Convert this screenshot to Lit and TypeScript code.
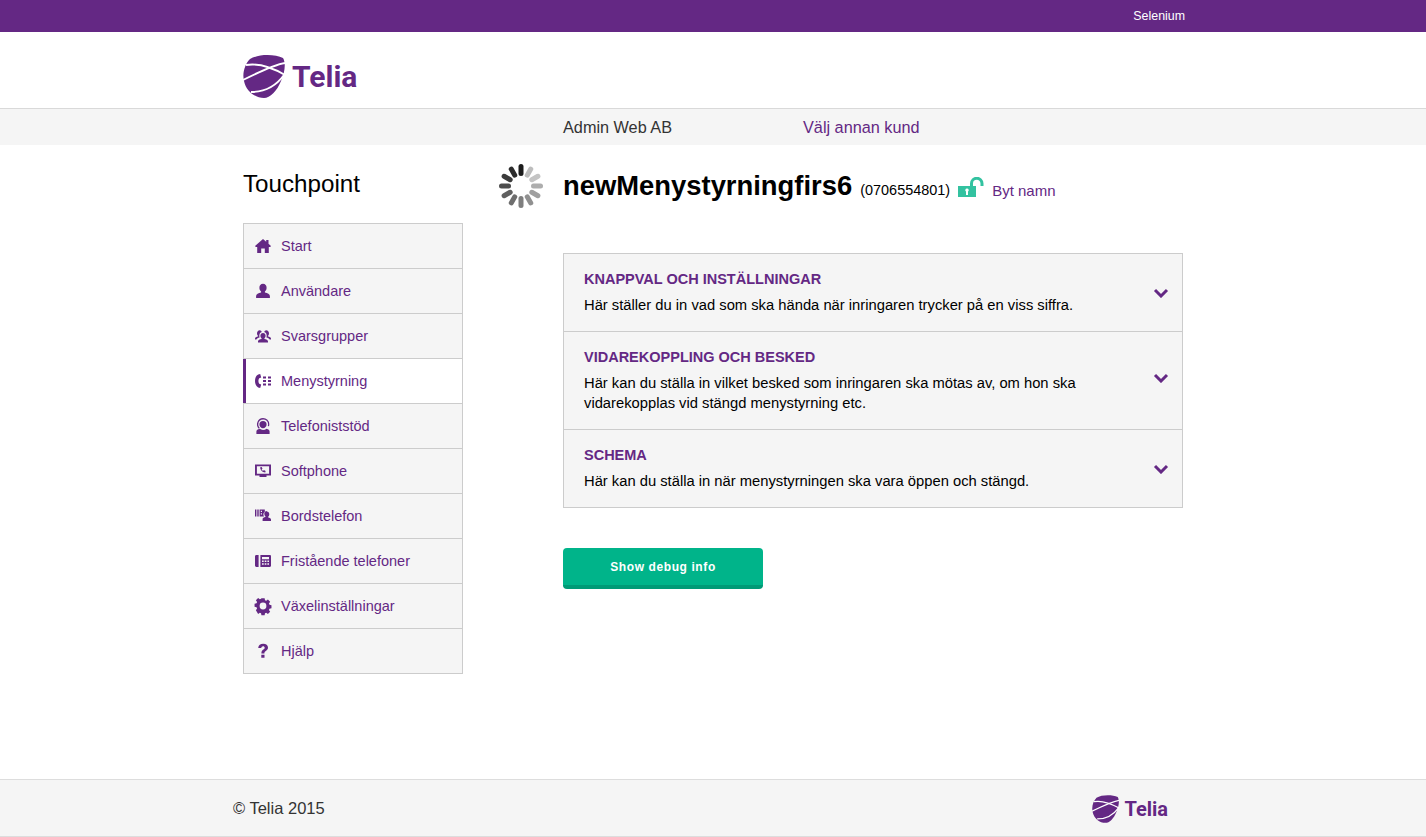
import { LitElement, html, css, svg } from "lit";
import { customElement } from "lit/decorators.js";

const logo = (w: number, h: number) => html`<svg class="globe" width=${w} height=${h} viewBox="0 0 42 43">
  <path fill="#642884" d="M7 4C15-1 32-1 40 3C43 8 42 17 38 26C34 36 27 43 21 43C12 43 3 36 1 26C-1 18 2 9 7 4Z"/>
  <g fill="none" stroke="#fff" stroke-width="1.900">
    <path d="M3 10C15 8 30 13 42 20"/>
    <path d="M42 8C30 10 14 18 0 25"/>
    <path d="M8 37C21 37 33 31 41 20"/>
  </g>
</svg>`;

const icons: Record<string, unknown> = {
  home: svg`<path d="M8 1l3.200 2.800V2h2.300v3.800L16 8l-.8 1H13.800v6H9.800v-4.500H6.200V15h-4V9H.8L0 8z"/>`,
  user: svg`<path d="M8 .8c2.300 0 3.600 1.700 3.600 3.900 0 1.600-.7 3-1.700 3.800v1.100c2.600.6 5 1.600 5 3.500v1.900H1.100v-1.900c0-1.900 2.400-2.900 5-3.500V8.500C5.100 7.700 4.400 6.300 4.400 4.700 4.400 2.500 5.700.8 8 .8z"/>`,
  group: svg`<path d="M8 5c1.600 0 2.600 1.200 2.600 2.800 0 1.100-.5 2-1.200 2.600v.7c1.800.4 3.600 1.100 3.600 2.400v.9H3v-.9c0-1.300 1.800-2 3.600-2.400v-.7c-.7-.6-1.200-1.500-1.200-2.600C5.400 6.200 6.400 5 8 5zM4.700 2.200c1.100 0 1.900.8 2.100 1.900C5.100 4.500 4.300 6.100 4.300 7.800c0 .6.100 1.100.3 1.600-1.500.4-2.800 1.100-3.300 2.100H0v-1c0-1.100 1.400-1.700 2.900-2v-.8C2.300 7.200 2 6.400 2 5.500 2 3.600 3.100 2.200 4.700 2.200zM11.300 2.200c1.600 0 2.700 1.400 2.700 3.300 0 .9-.3 1.700-.9 2.200v.8c1.500.3 2.900.9 2.900 2v1h-1.300c-.5-1-1.800-1.700-3.300-2.100.2-.5.300-1 .3-1.600 0-1.700-.8-3.300-2.500-3.700.2-1.100 1-1.900 2.100-1.900z"/>`,
  menu: svg`<path d="M5.200 1 3.200 1.600C1 2.800 0 5.200 0 8s1 5.200 3.200 6.400l2 .6 1-3.400-2-.9C3.700 10 3.400 9.100 3.400 8s.3-2 .8-2.700l2-.9z"/><path d="M8 3.500h3v1.900H8zM13 3.500h3v1.900h-3zM8 7.050h3v1.900H8zM13 7.050h3v1.900h-3zM8 10.600h3v1.900H8zM13 10.600h3v1.900h-3z"/>`,
  support: svg`<path d="M8 0a6.300 6.300 0 0 1 6.300 6.300c0 .7-.1 1.400-.3 2l-1.200-.4c.2-.5.300-1 .3-1.600a4.900 4.900 0 0 0-9.800 0c0 1.400.5 2.600 1.400 3.500l-.9.900A6.300 6.300 0 0 1 8 0zM8 2.900a3.600 3.600 0 0 1 3.600 3.600c0 2-1.600 3.700-3.600 3.700S4.400 8.500 4.400 6.500A3.600 3.600 0 0 1 8 2.900zM4.700 10.800c.9.700 2.100 1.100 3.300 1.100 1.400 0 2.600-.4 3.500-1.200 1.900.5 3.100 1.400 3.100 2.700V16H1.400v-2.600c0-1.200 1.300-2.100 3.300-2.600z"/>`,
  softphone: svg`<path fill-rule="evenodd" d="M0 1.500h16v11h-4.500V14h-7v-1.500H0zM1.900 3.200v7.600h12.200V3.200z"/><path d="M5.200 4.300l1.500-.3.800 1.800-.9.700c.3.600.8 1.100 1.500 1.500l.7-.9 1.800.8-.3 1.500c-2.600.2-5.300-2.500-5.100-5.100z"/>`,
  desk: svg`<path d="M0 1.500h1.400v7H0zM2.300 1.500h1.400v7H2.300zM4.600 1.500h5.200v2.200c-.9.600-1.400 1.700-1.400 2.800 0 .8.200 1.500.6 2H4.600zM5.800 2.700V4H7V2.700zM5.800 5.200v1.300H7V5.200zM11.800 3.500c1.500 0 2.500 1.200 2.500 2.800 0 1.100-.4 1.900-1.100 2.400v.8c1.500.3 2.800.9 2.800 2v1.500H7.600V11c0-1.100 1.300-1.700 2.800-2v-.8c-.7-.5-1.100-1.300-1.100-2.400 0-1.600 1-2.800 2.500-2.800z"/>`,
  phones: svg`<path fill-rule="evenodd" d="M0 3.400C0 2.600.6 2 1.400 2h2.200v12H1.400C.6 14 0 13.400 0 12.600zM5.400 2h9.400c.7 0 1.200.5 1.200 1.200v9.600c0 .7-.5 1.200-1.200 1.200H5.400zM7 4v2.300h7V4zM7 7.500v1.500h1.700V7.500zM9.700 7.500v1.500h1.700V7.500zM12.400 7.500v1.500H14V7.500zM7 10.200v1.500h1.700v-1.500zM9.700 10.200v1.500h1.700v-1.500zM12.400 10.200v1.500H14v-1.500z"/>`,
  gear: svg`<path fill-rule="evenodd" d="M6.300 0h3.400l.4 2.100 1.300.6L13.200 1.400l2.400 2.400-1.300 1.800.6 1.300 2.100.4v3.400l-2.100.4-.6 1.300 1.300 1.800-2.400 2.400-1.800-1.300-1.300.6-.4 2.100H6.300l-.4-2.100-1.300-.6-1.800 1.300L.4 12.600l1.300-1.800-.6-1.300L-1 9.100V5.700l2.100-.4.6-1.300L.4 2.200 2.800-.2 4.600 1.100l1.300-.6z" transform="translate(0.500 0.300) scale(.94)"/><circle cx="8" cy="8" r="3.400" fill="#f5f5f5"/>`,
  help: svg`<path d="M3.200 4.900C3.500 2.100 5.500.7 8.200.7c2.900 0 4.800 1.500 4.800 3.900 0 1.700-.9 2.600-2.200 3.500-1 .7-1.400 1.200-1.400 2.300H6.400c0-2 .6-2.900 1.900-3.800.9-.6 1.400-1 1.400-1.800 0-.9-.7-1.500-1.600-1.500-1 0-1.700.7-1.800 1.800zM6.300 11.700h3.200v3.100H6.300z"/>`,
};

const nav = [
  ["Start", "home"],
  ["Användare", "user"],
  ["Svarsgrupper", "group"],
  ["Menystyrning", "menu"],
  ["Telefoniststöd", "support"],
  ["Softphone", "softphone"],
  ["Bordstelefon", "desk"],
  ["Fristående telefoner", "phones"],
  ["Växelinställningar", "gear"],
  ["Hjälp", "help"],
];

const spinnerColors = ["#1c1c1c", "#bdbdbd", "#c4c4c4", "#adadad", "#a0a0a0", "#909090", "#7e7e7e", "#6e6e6e", "#606060", "#4c4c4c", "#3c3c3c", "#2c2c2c"];

const panels = [
  ["Knappval och inställningar", "Här ställer du in vad som ska hända när inringaren trycker på en viss siffra."],
  ["Vidarekoppling och besked", "Här kan du ställa in vilket besked som inringaren ska mötas av, om hon ska vidarekopplas vid stängd menystyrning etc."],
  ["Schema", "Här kan du ställa in när menystyrningen ska vara öppen och stängd."],
];

@customElement("app-root")
export class AppRoot extends LitElement {
  static styles = css`
    :host { display: block; font-family: "Liberation Sans", Arial, sans-serif; color: #000; background: #fff; }
    a { color: #642884; text-decoration: none; }
    .top { height: 32px; background: #642884; display: flex; justify-content: flex-end; align-items: center; padding-right: 241px; }
    .top span { color: #fff; font-size: 12.4px; }
    .head { height: 64px; padding: 12px 0 0 243px; display: flex; align-items: center; border-bottom: 1px solid #d9d9d9; }
    .brand { display: flex; align-items: center; color: #642884; font-family: Roboto, "Liberation Sans", sans-serif; font-weight: 700; }
    .brand.big { gap: 7px; font-size: 30px; }
    .brand.small { gap: 5px; font-size: 20px; }
    .sub { height: 35px; background: #f5f5f5; padding: 1px 0 0 563px; display: flex; align-items: center; font-size: 16.25px; color: #333; }
    .sub .customer { width: 240px; }
    main { height: 634px; width: 940px; margin-left: 243px; display: flex; }
    aside { width: 220px; margin-right: 36px; }
    aside h2 { margin: 24px 0 24px; font-weight: 400; font-size: 24.2px; line-height: 30px; color: #000; }
    nav { border: 1px solid #ccc; border-bottom: 0; }
    .item { display: flex; align-items: center; height: 44px; border-bottom: 1px solid #ccc; background: #f5f5f5; padding-left: 11px; gap: 10px; font-size: 14.5px; color: #642884; }
    .item svg { width: 16px; height: 16px; fill: #642884; flex: none; overflow: visible; }
    .item.on { background: #fff; box-shadow: inset 3px 0 0 #642884; margin-left: -1px; padding-left: 12px; }
    .right { width: 684px; }
    .title { display: flex; align-items: center; height: 44px; margin-top: 19px; }
    .title .spin { margin-right: 20px; flex: none; }
    .title h1 { margin: 0 8px 0 0; font-size: 27.4px; font-weight: 700; }
    .title .num { font-size: 14.45px; margin-top: 8px; margin-right: 8px; }
    .title .lock { margin-top: 2px; margin-right: 7px; }
    .title a { font-size: 15px; margin-top: 9px; }
    .content { padding-left: 64px; }
    .panels { margin-top: 45px; border: 1px solid #ccc; border-bottom: 0; }
    .panel { position: relative; background: #f5f5f5; border-bottom: 1px solid #ccc; padding: 16px 60px 16px 20px; }
    .panel h3 { margin: 0 0 7px; font-size: 14.5px; line-height: 18px; text-transform: uppercase; color: #642884; }
    .panel p { margin: 0; font-size: 14.76px; line-height: 20px; }
    .panel svg { position: absolute; right: 13px; top: 34px; }
    .panel:nth-child(2) svg { top: 41px; }
    .btn { margin-top: 40px; width: 200px; height: 37px; background: #00b48a; border: 0; border-bottom: 4px solid #009a76; box-sizing: content-box; border-radius: 4px; color: #fff; font: 700 12px "Liberation Sans", Arial, sans-serif; letter-spacing: 0.6px; padding: 0; display: block; }
    footer { height: 55px; padding: 1px 258px 0 233px; background: #f5f5f5; border-top: 1px solid #ddd; border-bottom: 1px solid #ddd; display: flex; align-items: center; justify-content: space-between; font-size: 16.5px; color: #333; }
  `;

  render() {
    return html`
      <div class="top"><span>Selenium</span></div>
      <div class="head"><div class="brand big">${logo(42, 43)}<span>Telia</span></div></div>
      <div class="sub"><span class="customer">Admin Web AB</span><a href="#">Välj annan kund</a></div>
      <main>
        <aside>
          <h2>Touchpoint</h2>
          <nav>
            ${nav.map(([label, ic]) => html`<div class="item ${label === "Menystyrning" ? "on" : ""}">
              <svg viewBox="0 0 16 16">${icons[ic]}</svg><span>${label}</span></div>`)}
          </nav>
        </aside>
        <div class="right">
          <div class="title">
            <svg class="spin" width="44" height="44" viewBox="-22 -22 44 44">
              ${spinnerColors.map((c, i) => svg`<line x1="0" y1="-12.500" x2="0" y2="-19.500" stroke=${c} stroke-width="5" stroke-linecap="round" transform="rotate(${i * 30})"/>`)}
            </svg>
            <h1>newMenystyrningfirs6</h1>
            <span class="num">(0706554801)</span>
            <svg class="lock" width="27" height="21" viewBox="0 0 27 21">
              <path fill="none" stroke="#33c2a0" stroke-width="3" d="M13.500 10V6.500a5 5 0 0 1 10.500 0V9"/>
              <path fill="#33c2a0" fill-rule="evenodd" d="M0 9h18v11H0zM9 11.500a1.700 1.700 0 0 0-1 3.100V18h2v-3.400a1.700 1.700 0 0 0-1-3.100z"/>
            </svg>
            <a href="#">Byt namn</a>
          </div>
          <div class="content">
            <div class="panels">
              ${panels.map(([t, d]) => html`<div class="panel"><h3>${t}</h3><p>${d}</p>
                <svg width="16" height="10" viewBox="0 0 16 10"><path d="M2 2l6 6 6-6" fill="none" stroke="#642884" stroke-width="3"/></svg>
              </div>`)}
            </div>
            <button class="btn">Show debug info</button>
          </div>
        </div>
      </main>
      <footer><span>© Telia 2015</span><div class="brand small">${logo(27, 28)}<span>Telia</span></div></footer>
    `;
  }
}
